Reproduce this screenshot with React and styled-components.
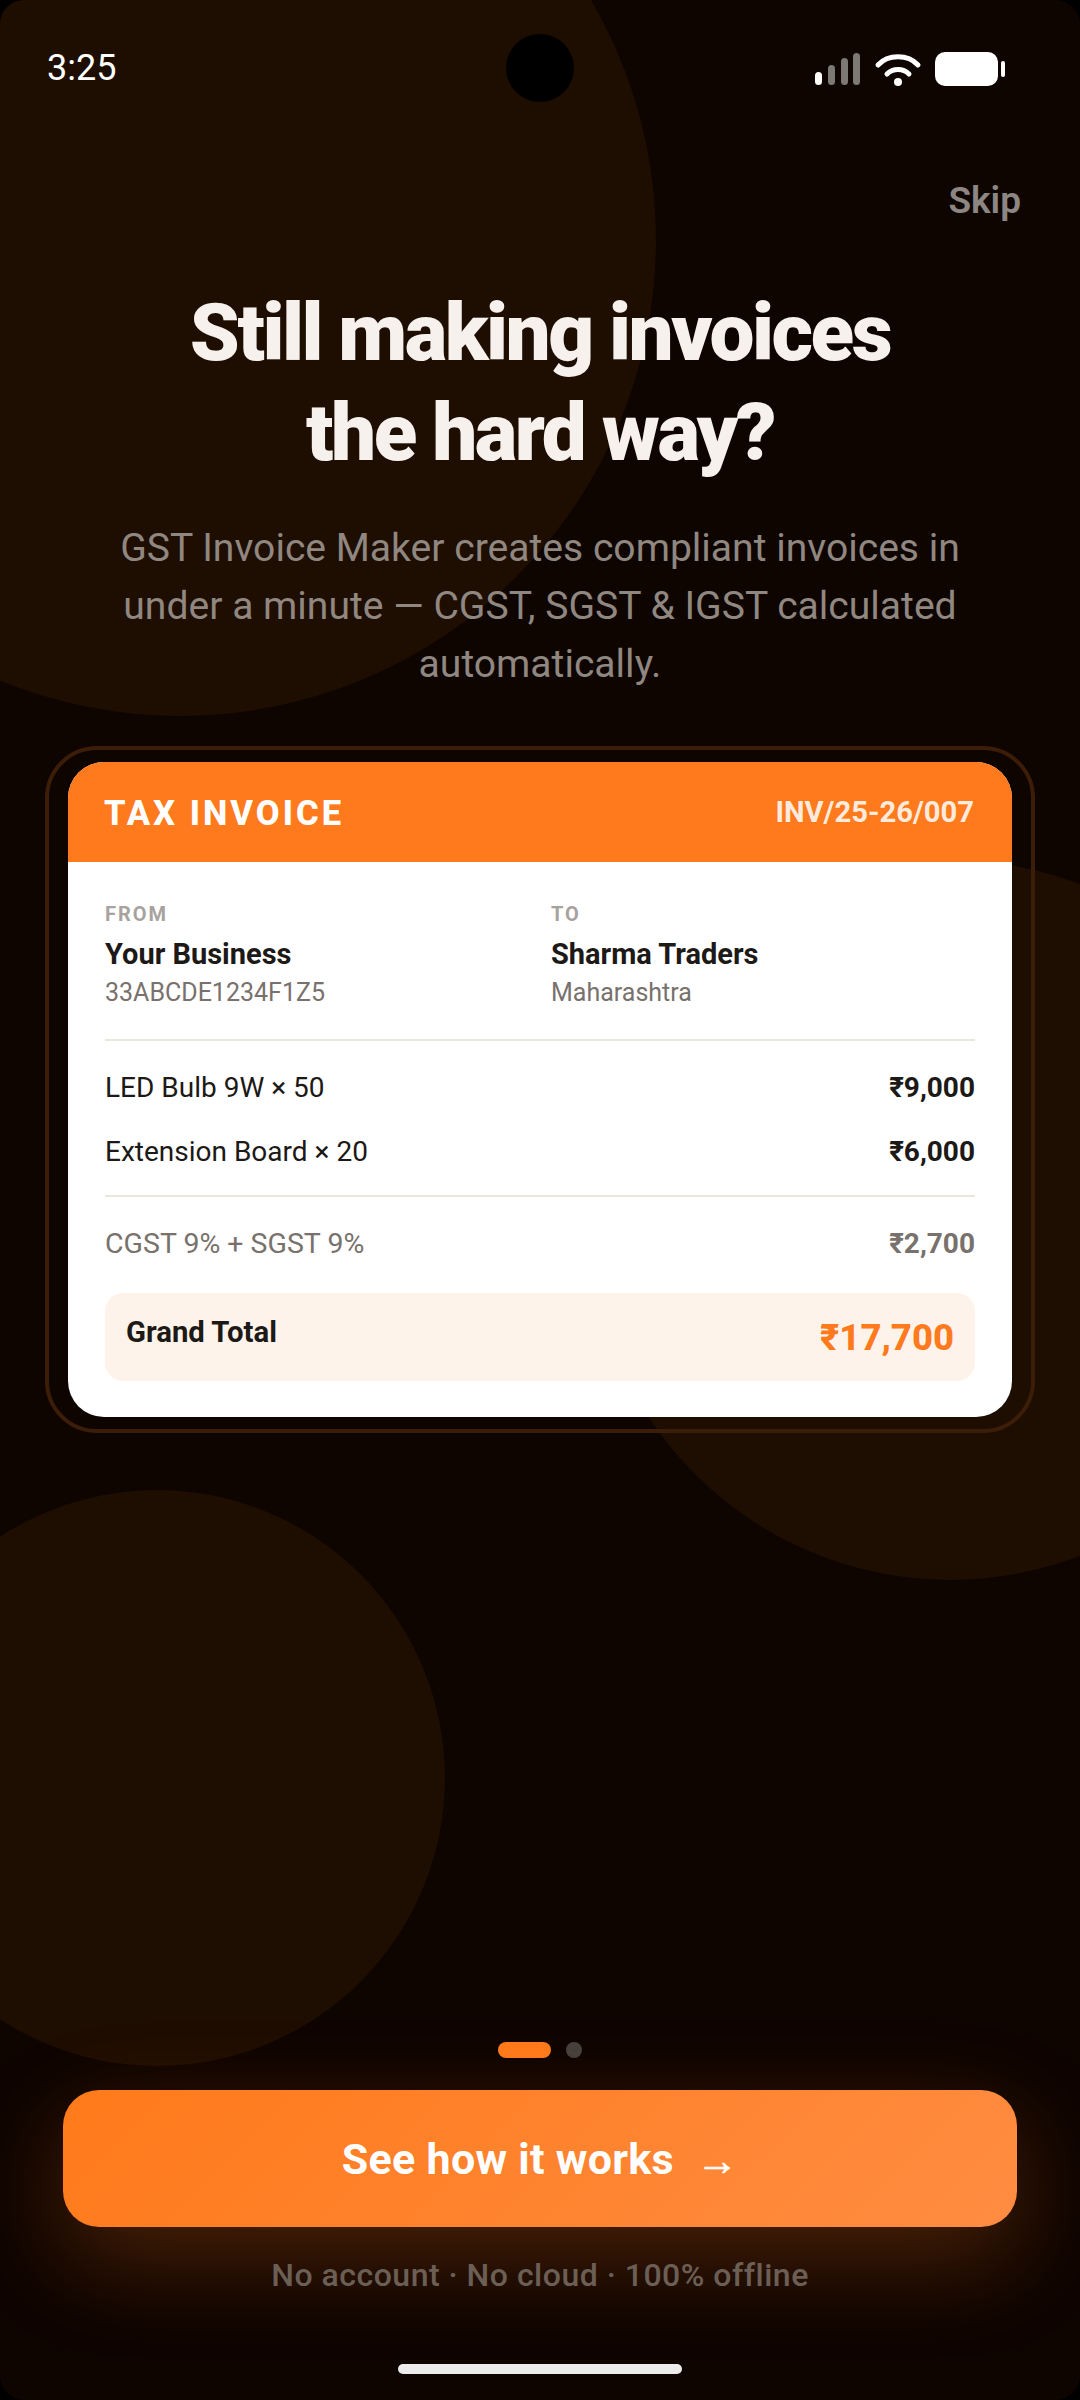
import React from "react";
import styled, { createGlobalStyle } from "styled-components";

const Global = createGlobalStyle`
  html, body { margin: 0; padding: 0; background: #000; }
  * { box-sizing: border-box; }
`;

const Screen = styled.div`
  position: relative;
  width: 1080px;
  height: 2400px;
  overflow: hidden;
  border-radius: 24px;
  background: #0e0400;
  font-family: Roboto, "Noto Sans", sans-serif;
  display: flex;
  flex-direction: column;
`;

const Blob = styled.div`
  position: absolute;
  border-radius: 50%;
  background: #1e0d01;
  left: ${(p) => p.$x - p.$r}px;
  top: ${(p) => p.$y - p.$r}px;
  width: ${(p) => p.$r * 2}px;
  height: ${(p) => p.$r * 2}px;
`;

const Camera = styled.div`
  position: absolute;
  left: 506px;
  top: 34px;
  width: 68px;
  height: 68px;
  border-radius: 50%;
  background: #000;
`;

const StatusBar = styled.div`
  position: relative;
  height: 170px;
  padding: 45px 75px 0 47px;
  display: flex;
  justify-content: space-between;
  align-items: flex-start;
`;

const Time = styled.span`
  font-size: 36px;
  line-height: 46px;
  color: #fff;
`;

const StatusIcons = styled.svg`
  margin-top: 5px;
  display: block;
`;

const SkipRow = styled.div`
  position: relative;
  display: flex;
  justify-content: flex-end;
  padding-right: 59px;
  height: 64px;
`;

const Skip = styled.span`
  font-size: 37px;
  font-weight: 600;
  line-height: 62px;
  color: #8c8783;
`;

const Heading = styled.h1`
  position: relative;
  margin: 0;
  padding-top: 49px;
  text-align: center;
  font-size: 80px;
  line-height: 100px;
  font-weight: 900;
  letter-spacing: -2.5px;
  color: #f6f1ec;
`;

const Lead = styled.p`
  position: relative;
  margin: 36px 0 0;
  padding: 0 78px;
  text-align: center;
  font-size: 39.1px;
  line-height: 58px;
  color: #8f8780;
`;

const Frame = styled.div`
  position: relative;
  margin: 53px 45px 0;
  padding: 12px 19px;
  border: 4px solid #3c1d08;
  border-radius: 52px;
`;

const Card = styled.div`
  background: #fff;
  border-radius: 36px;
  overflow: hidden;
`;

const CardHead = styled.div`
  height: 100px;
  padding: 0 38px 0 36px;
  background: #ff7a1c;
  display: flex;
  justify-content: space-between;
  align-items: center;
`;

const CardTitle = styled.span`
  margin-top: 2px;
  font-size: 34.6px;
  font-weight: 800;
  letter-spacing: 3px;
  color: #fff;
`;

const InvNo = styled.span`
  font-size: 29.2px;
  font-weight: 700;
  color: #ffebdd;
`;

const CardBody = styled.div`
  padding: 40px 37px 36px;
`;

const Parties = styled.div`
  display: grid;
  grid-template-columns: 446px 1fr;
  padding-bottom: 30px;
  border-bottom: 2px solid #e9e7dc;
`;

const PartyLabel = styled.div`
  font-size: 20px;
  line-height: 24px;
  font-weight: 700;
  letter-spacing: 2px;
  color: #a8a29e;
`;

const PartyName = styled.div`
  margin-top: 9px;
  font-size: 29px;
  line-height: 38px;
  font-weight: 700;
  color: #1c1917;
`;

const PartyMeta = styled.div`
  margin-top: 4px;
  font-size: 25px;
  line-height: 32px;
  color: #78716c;
`;

const Items = styled.div`
  padding: 27px 0 23px;
  border-bottom: 2px solid #e9e7dc;
  display: flex;
  flex-direction: column;
  gap: 24px;
`;

const Row = styled.div`
  display: flex;
  justify-content: space-between;
  align-items: center;
  font-size: 28px;
  line-height: 40px;
  color: ${(p) => (p.$muted ? "#78716c" : "#1c1917")};
`;

const Amount = styled.span`
  font-weight: 700;
`;

const TaxRow = styled(Row)`
  margin-top: 27px;
`;

const TaxLabel = styled.span`
  font-size: 28.5px;
`;

const Total = styled.div`
  margin-top: 29px;
  height: 88px;
  padding: 21px 21px 0 21px;
  border-radius: 18px;
  background: #fef3eb;
  display: flex;
  justify-content: space-between;
  align-items: flex-start;
`;

const TotalLabel = styled.span`
  font-size: 29.3px;
  line-height: 36px;
  font-weight: 700;
  color: #1c1917;
`;

const TotalValue = styled.span`
  font-size: 36.5px;
  line-height: 48px;
  font-weight: 800;
  color: #ff7a1c;
`;

const Footer = styled.div`
  position: relative;
  margin-top: auto;
  display: flex;
  flex-direction: column;
  align-items: center;
`;

const Dots = styled.div`
  display: flex;
  gap: 15px;
`;

const Dot = styled.div`
  height: 16px;
  width: ${(p) => (p.$active ? 53 : 16)}px;
  border-radius: 8px;
  background: ${(p) => (p.$active ? "#ff7a1c" : "#44403c")};
`;

const Cta = styled.button`
  margin-top: 32px;
  width: 954px;
  height: 137px;
  border: 0;
  border-radius: 36px;
  background: linear-gradient(135deg, #ff7a1a, #ff8c42);
  box-shadow: 0 32px 96px rgba(255, 122, 26, 0.25);
  color: #fff;
  font-family: inherit;
  font-size: 43px;
  font-weight: 700;
  letter-spacing: 0.3px;
  display: flex;
  align-items: center;
  justify-content: center;
  gap: 22px;
`;

const Arrow = styled.span`
  font-size: 42px;
  margin-top: 4px;
  -webkit-text-stroke: 0.7px #fff;
`;

const Note = styled.div`
  margin-top: 27px;
  font-size: 32px;
  line-height: 42px;
  font-weight: 500;
  letter-spacing: 0.5px;
  color: #6b5f55;
`;

const HomeBar = styled.div`
  margin-top: 68px;
  margin-bottom: 26px;
  width: 284px;
  height: 10px;
  border-radius: 5px;
  background: #ececec;
`;

function Party({ label, name, meta }) {
  return (
    <div>
      <PartyLabel>{label}</PartyLabel>
      <PartyName>{name}</PartyName>
      <PartyMeta>{meta}</PartyMeta>
    </div>
  );
}

export default function App() {
  return (
    <Screen>
      <Global />
      <Blob $x={180} $y={240} $r={476} />
      <Blob $x={950} $y={1220} $r={360} />
      <Blob $x={157} $y={1778} $r={288} />
      <Camera />
      <StatusBar>
        <Time>3:25</Time>
        <StatusIcons width="192" height="40" viewBox="0 0 192 40">
          <rect x="2" y="22" width="7" height="13" rx="3.5" fill="#fff" />
          <rect x="15" y="15" width="7" height="20" rx="3.5" fill="#7c7874" />
          <rect x="28" y="8" width="7" height="27" rx="3.5" fill="#7c7874" />
          <rect x="40" y="3" width="7" height="32" rx="3.5" fill="#7c7874" />
          <path d="M65 15 C75 4 95 4 105 15" fill="none" stroke="#fff" strokeWidth="5" strokeLinecap="round" />
          <path d="M74 24 C80 18 90 18 96 24" fill="none" stroke="#fff" strokeWidth="5" strokeLinecap="round" />
          <circle cx="85" cy="32" r="4" fill="#fff" />
          <rect x="122" y="2" width="63" height="34" rx="10" fill="#fff" />
          <rect x="188" y="11" width="4" height="16" rx="2" fill="#fff" />
        </StatusIcons>
      </StatusBar>
      <SkipRow>
        <Skip>Skip</Skip>
      </SkipRow>
      <Heading>
        Still making invoices
        <br />
        the hard way?
      </Heading>
      <Lead>GST Invoice Maker creates compliant invoices in under a minute — CGST, SGST &amp; IGST calculated automatically.</Lead>
      <Frame>
        <Card>
          <CardHead>
            <CardTitle>TAX INVOICE</CardTitle>
            <InvNo>INV/25-26/007</InvNo>
          </CardHead>
          <CardBody>
            <Parties>
              <Party label="FROM" name="Your Business" meta="33ABCDE1234F1Z5" />
              <Party label="TO" name="Sharma Traders" meta="Maharashtra" />
            </Parties>
            <Items>
              <Row>
                <span>LED Bulb 9W × 50</span>
                <Amount>₹9,000</Amount>
              </Row>
              <Row>
                <span>Extension Board × 20</span>
                <Amount>₹6,000</Amount>
              </Row>
            </Items>
            <TaxRow $muted>
              <TaxLabel>CGST 9% + SGST 9%</TaxLabel>
              <Amount>₹2,700</Amount>
            </TaxRow>
            <Total>
              <TotalLabel>Grand Total</TotalLabel>
              <TotalValue>₹17,700</TotalValue>
            </Total>
          </CardBody>
        </Card>
      </Frame>
      <Footer>
        <Dots>
          <Dot $active />
          <Dot />
        </Dots>
        <Cta>
          See how it works
          <Arrow>→</Arrow>
        </Cta>
        <Note>No account · No cloud · 100% offline</Note>
        <HomeBar />
      </Footer>
    </Screen>
  );
}
